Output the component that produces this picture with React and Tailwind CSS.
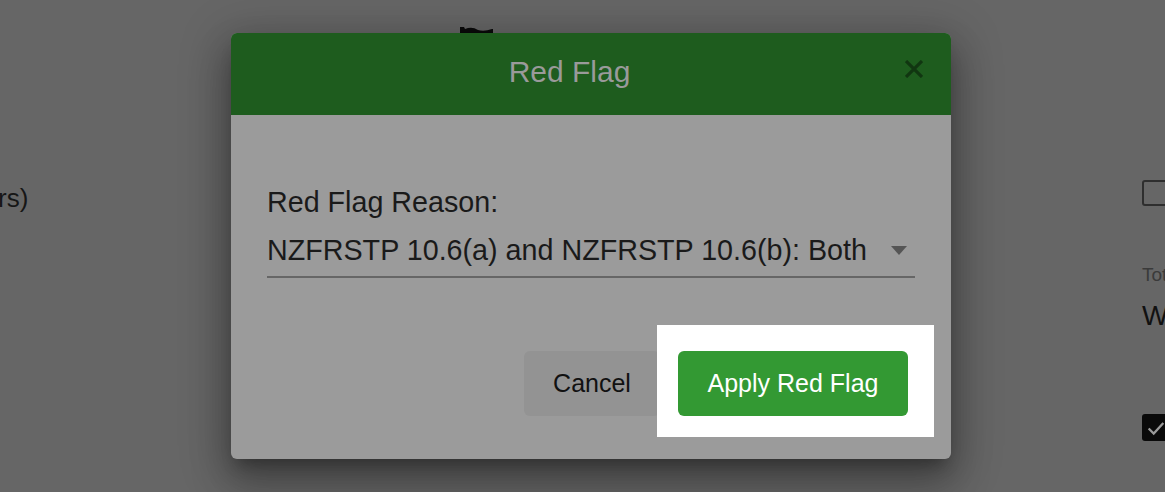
import React from 'react';

const font = { fontFamily: '"Liberation Sans", Arial, sans-serif' };

const Backdrop = () => (
    <div className="flex h-full w-full">
        {/* Left column (cut off) */}
        <div className="w-[460px] shrink-0 pt-[182px]">
            <span className="-ml-[54px] block whitespace-nowrap text-[26px] leading-[32px] text-[#161616]">(hours)</span>
        </div>

        {/* Icon peeking above dialog */}
        <div className="pt-[26px]">
            <svg width="34" height="10" viewBox="0 0 34 10">
                <path d="M0 1 L4 1 L5 3 Q12 0 18 4 Q24 6 32 3 L33 3 L33 10 L0 10 Z" fill="#0a0a0a" />
            </svg>
        </div>

        <div className="flex-1" />

        {/* Right column (cut off) */}
        <div className="w-[23px] shrink-0 pt-[180px]">
            <div className="h-[26px] w-[26px] rounded-[3px] border-2 border-[#2e2e2e]" />
            <div className="mt-[58px] whitespace-nowrap text-[19px] leading-[22px] text-[#3a3a3a]">Total</div>
            <div className="mt-[14px] whitespace-nowrap text-[28px] leading-[32px] text-[#111]">Water</div>
            <div className="mt-[82px] flex h-[27px] w-[27px] items-center justify-center rounded-[3px] bg-[#0a0a0a]">
                <svg width="22" height="22" viewBox="0 0 24 24" fill="none" stroke="#9a9a9a" strokeWidth="2.5">
                    <path d="M4 12.5 L9.5 18 L20 6.5" />
                </svg>
            </div>
        </div>
    </div>
);

const Dialog = () => (
    <div className="w-[720px] h-[426px] rounded-[6px] bg-[#9b9b9b] shadow-[0_11px_15px_-7px_rgba(0,0,0,0.3),0_24px_38px_3px_rgba(0,0,0,0.22),0_9px_46px_8px_rgba(0,0,0,0.22)] flex flex-col">
        {/* Header */}
        <div className="flex h-[82px] items-center rounded-t-[6px] bg-[#1e5c1e] px-4 pb-[6px]">
            <div className="flex-1 text-center text-[30px] text-[#9a9a9a]">Red Flag</div>
            <button className="-mt-[4px] flex h-[43px] w-[43px] items-center justify-center">
                <svg width="18" height="18" viewBox="0 0 18 18" stroke="#113611" strokeWidth="3.2" strokeLinecap="butt">
                    <path d="M1 1 L17 17 M17 1 L1 17" />
                </svg>
            </button>
        </div>

        {/* Body */}
        <div className="px-[36px] pt-[71px]">
            <div className="text-[28.7px] leading-[32px] text-[#1a1a1a]">Red Flag Reason:</div>
            <div className="mt-[16px] flex items-center justify-between border-b-2 border-[#666] pb-[10px]">
                <span className="text-[28.7px] leading-[32px] text-[#1a1a1a]">NZFRSTP 10.6(a) and NZFRSTP 10.6(b): Both</span>
                <svg width="16" height="9" viewBox="0 0 16 9" className="mr-[8px]">
                    <path d="M0 0 L16 0 L8 9 Z" fill="#555" />
                </svg>
            </div>
        </div>

        {/* Footer */}
        <div className="mt-[47px] flex items-start justify-end pr-[17px]">
            <button className="-mr-[3px] mt-[26px] h-[65px] w-[136px] rounded-[6px] bg-[#939393] text-[25px] text-[#111]">
                Cancel
            </button>
            <div className="relative z-10 bg-white pl-[21px] pr-[26px] pt-[26px] pb-[21px]">
                <button className="h-[65px] w-[230px] rounded-[6px] bg-[#339933] text-[25px] text-white">
                    Apply Red Flag
                </button>
            </div>
        </div>
    </div>
);

export default function App() {
    return (
        <div className="relative h-[492px] w-full overflow-hidden bg-[#666]" style={font}>
            <Backdrop />
            <div className="absolute inset-0 pl-[231px] pt-[33px]">
                <Dialog />
            </div>
        </div>
    );
}
